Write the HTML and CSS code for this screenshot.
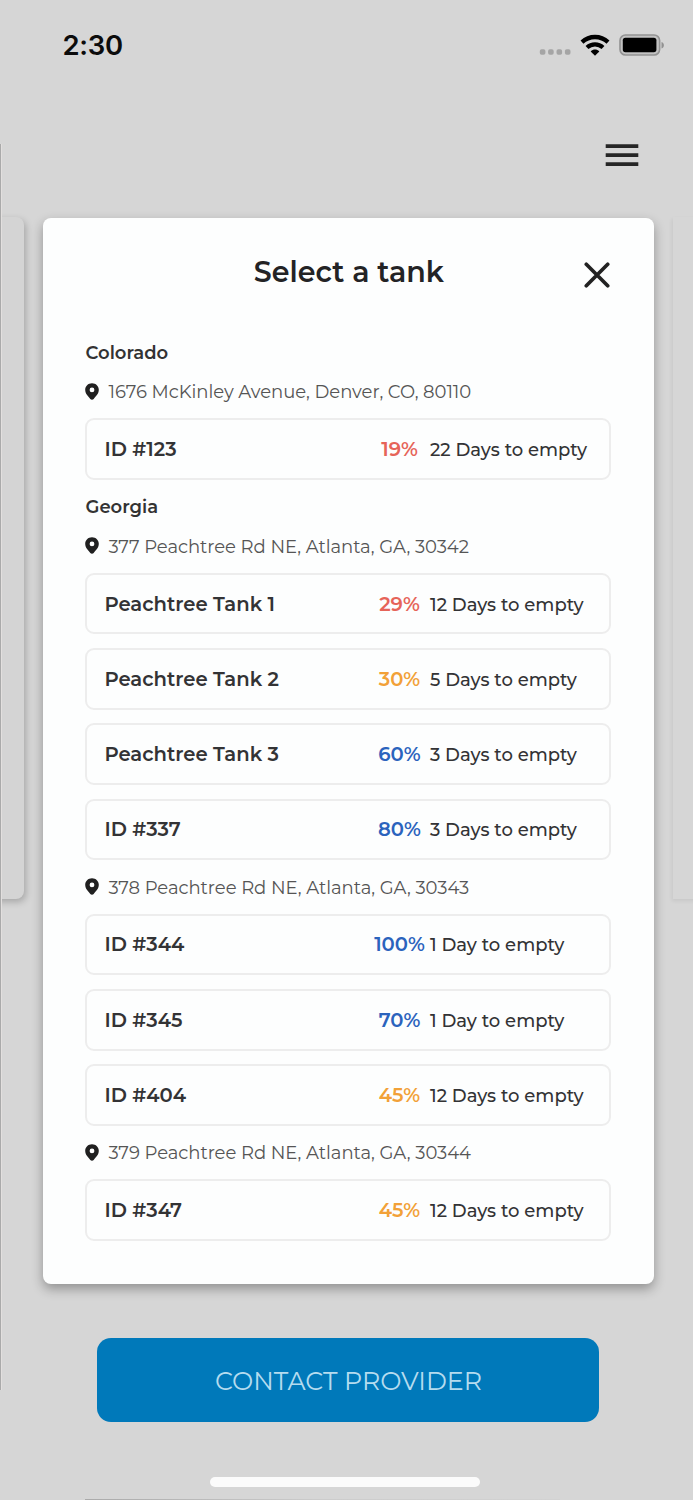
FILE: index.html
```html
<!DOCTYPE html>
<html lang="en">
<head>
<meta charset="utf-8">
<title>Select a tank</title>
<link rel="stylesheet" href="styles.css">
</head>
<body>
<svg class="defs" aria-hidden="true"><symbol id="pin" viewBox="0 0 14 17"><path fill-rule="evenodd" d="M7 0.200C3.100 0.200.2 3.100.2 6.800c0 4.300 3.300 6.700 5.100 9.100.8 1 2.600 1 3.400 0 1.800-2.400 5.100-4.800 5.100-9.100C13.800 3.100 10.900.2 7 .2zM7 4.500a2.400 2.400 0 1 1 0 4.800 2.400 2.400 0 0 1 0-4.800z"/></symbol></svg>
<div class="phone">
  <div class="side side-left"></div>
  <div class="side side-right"></div>
  <div class="edge"></div>
  <header class="status">
    <span class="time">2:30</span>
    <div class="indicators">
      <svg class="dots" width="32" height="7" viewBox="0 0 32 7"><g fill="#a5a5a5"><rect x="0.800" y="0.200" width="5.600" height="5.600" rx="1.800"/><rect x="9.100" y="0.200" width="5.600" height="5.600" rx="1.800"/><rect x="17.500" y="0.200" width="5.600" height="5.600" rx="1.800"/><rect x="25.900" y="0.200" width="5.600" height="5.600" rx="1.800"/></g></svg>
      <svg class="wifi" width="30" height="23" viewBox="0 0 30 23"><g fill="none" stroke="#000" stroke-width="4.300"><path d="M2 8.100C9.300 1.300 20.700 1.300 28 8.100"/><path d="M7 13.500C11.600 9.400 18.400 9.400 23 13.500"/></g><path d="M10.700 17.400c2.500-2.400 6.100-2.400 8.600 0L15 21.800z"/></svg>
      <svg class="battery" width="46" height="23" viewBox="0 0 46 23"><rect x="1" y="1" width="39.600" height="20" rx="5.500" fill="#c2c2c2" stroke="#929292" stroke-width="1.600"/><rect x="3.800" y="3.700" width="33.600" height="14.500" rx="2.600"/><path d="M42.500 8c3.200 1 3.200 5.500 0 6.500z" fill="#929292"/></svg>
    </div>
  </header>
  <nav class="topbar"><svg width="34" height="23" viewBox="0 0 34 23"><path d="M0.700 2.200h32.600M0.700 11.200h32.600M0.700 20.200h32.600" stroke="#262626" stroke-width="3.700"/></svg></nav>
  <main class="modal">
    <div class="modal-head">
      <h1>Select a tank</h1>
      <svg class="close" width="26" height="26" viewBox="0 0 26 26"><path d="M2.300 2.300l21.400 21.400M23.700 2.300L2.300 23.700" stroke="#222" stroke-width="3.700" stroke-linecap="round"/></svg>
    </div>
    <h2>Colorado</h2>
    <p class="address"><svg width="14" height="17"><use href="#pin"/></svg><span>1676 McKinley Avenue, Denver, CO, 80110</span></p>
    <div class="tanks">
      <div class="tank"><b>ID #123</b><strong class="red">19%</strong><span>22 Days to empty</span></div>
    </div>
    <h2>Georgia</h2>
    <p class="address"><svg width="14" height="17"><use href="#pin"/></svg><span>377 Peachtree Rd NE, Atlanta, GA, 30342</span></p>
    <div class="tanks">
      <div class="tank"><b>Peachtree Tank 1</b><strong class="red">29%</strong><span>12 Days to empty</span></div>
      <div class="tank"><b>Peachtree Tank 2</b><strong class="orange">30%</strong><span>5 Days to empty</span></div>
      <div class="tank"><b>Peachtree Tank 3</b><strong class="blue">60%</strong><span>3 Days to empty</span></div>
      <div class="tank"><b>ID #337</b><strong class="blue">80%</strong><span>3 Days to empty</span></div>
    </div>
    <p class="address"><svg width="14" height="17"><use href="#pin"/></svg><span>378 Peachtree Rd NE, Atlanta, GA, 30343</span></p>
    <div class="tanks">
      <div class="tank"><b>ID #344</b><strong class="blue">100%</strong><span>1 Day to empty</span></div>
      <div class="tank"><b>ID #345</b><strong class="blue">70%</strong><span>1 Day to empty</span></div>
      <div class="tank"><b>ID #404</b><strong class="orange">45%</strong><span>12 Days to empty</span></div>
    </div>
    <p class="address"><svg width="14" height="17"><use href="#pin"/></svg><span>379 Peachtree Rd NE, Atlanta, GA, 30344</span></p>
    <div class="tanks">
      <div class="tank"><b>ID #347</b><strong class="orange">45%</strong><span>12 Days to empty</span></div>
    </div>
  </main>
  <button class="contact"><span>CONTACT PROVIDER</span></button>
  <div class="home"></div>
  <div class="next"></div>
</div>
</body>
</html>
```
FILE: styles.css
```css
* { box-sizing: border-box; }
body { margin: 0; background: #d6d6d6; font-family: Montserrat, Inter, sans-serif; color: #333335; }
.defs { display: none; }
.phone { position: relative; width: 693px; height: 1500px; overflow: hidden; background: #d6d6d6; display: flex; flex-direction: column; }
.side { position: absolute; top: 217px; height: 682px; background: #d4d4d4; }
.side-left { left: -20px; width: 44px; border-radius: 8px; box-shadow: 2px 3px 7px rgba(0,0,0,.22); }
.side-right { left: 673px; width: 40px; background: #d6d6d6; box-shadow: -1px 2px 4px rgba(0,0,0,.07); }
.edge { position: absolute; left: 0; top: 144px; width: 2px; height: 1246px; background: #e2dfde; border-left: 1px solid #aaa; }
.status { height: 90px; padding: 0 28px 0 62.500px; display: flex; justify-content: space-between; align-items: center; }
.time { color: #0c0c0c; font-family: Inter, sans-serif; font-weight: 600; font-size: 27.500px; line-height: 34px; letter-spacing: -.3px; }
.indicators { display: flex; align-items: center; }
.dots { margin: 14px 9px 0 0; }
.wifi { margin-right: 9px; }
.topbar { height: 128px; padding: 54px 54px 0 0; display: flex; justify-content: flex-end; align-items: flex-start; }
.modal { position: relative; width: 611.500px; height: 1065.500px; margin-left: 42.700px; padding: 0 42px 0 42.800px; background: #fdfefe; border-radius: 8px; box-shadow: 0 5px 12px rgba(0,0,0,.32); }
.modal-head { height: 114px; padding-top: 34px; display: grid; grid-template-columns: 26px 1fr 26px; align-items: start; }
h1 { grid-column: 2; margin: 0; text-align: center; font-size: 28.500px; line-height: 40px; font-weight: 600; letter-spacing: 0; color: #232325; }
.close { margin: 10px 2.500px 0 -2.500px; }
h2 { margin: 0; height: 39.700px; padding-top: 16px; font-size: 18px; line-height: 24px; font-weight: 600; color: #333; }
.modal-head + h2 { height: 32.400px; padding-top: 9px; }
.address { margin: 0; height: 53.600px; display: flex; align-items: center; gap: 9px; font-size: 18px; letter-spacing: -.04px; color: #555; white-space: nowrap; }
.address span { padding-top: 2px; }
.address svg { fill: #202020; }
.tanks { display: grid; gap: 13.750px; }
.tank { width: 526px; height: 61.700px; margin-bottom: -.2px; border: 2px solid #ededed; border-radius: 9px; padding-left: 17px; display: grid; grid-template-columns: 265px 60px 1fr; align-items: center; font-size: 19.600px; white-space: nowrap; }
.tank b { font-weight: 600; }
.tank strong { font-weight: 600; text-align: center; }
.tank span { font-size: 18px; font-weight: 500; padding: 2px 0 0 .5px; }
.red { color: #e66459; }
.orange { color: #f2a138; }
.blue { color: #2b63bd; }
.contact { width: 502px; height: 84px; margin: 54.500px 0 0 97px; padding: 1px 0 0 1px; border: 0; border-radius: 14px; background: #0079ba; color: #b5dcef; font: 400 25.300px Montserrat, Inter, sans-serif; }
.home { width: 270px; height: 10px; margin: 55px 0 0 210px; border-radius: 5px; background: #fbfbfb; }
.next { width: 475px; height: 1px; margin: 12px 0 0 85px; background: linear-gradient(90deg,#aaa,#ccc 50%,#d2d2d2); }
```
